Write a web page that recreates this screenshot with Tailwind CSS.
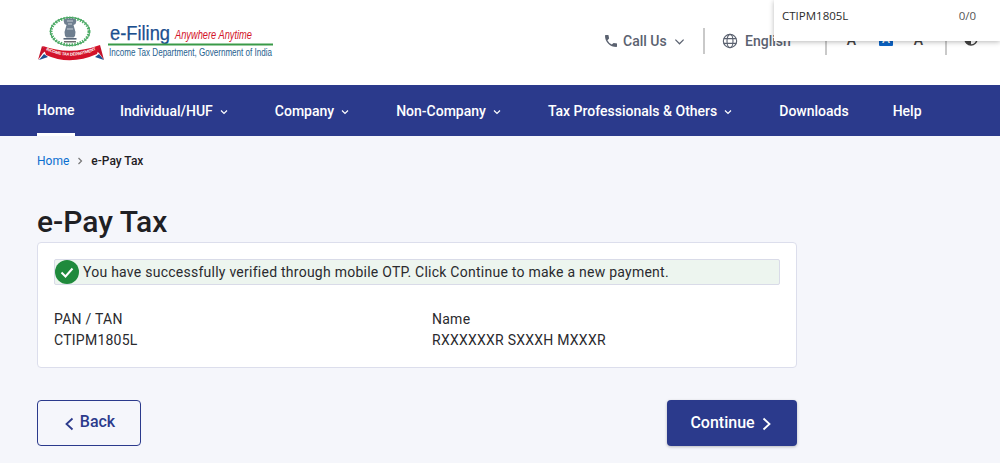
<!DOCTYPE html>
<html lang="en">
<head>
  <meta charset="UTF-8">
  <meta name="viewport" content="width=device-width, initial-scale=1.0">
  <title>e-Pay Tax</title>
  <script src="https://cdn.jsdelivr.net/npm/@tailwindcss/browser@4"></script>
</head>
<body class="relative h-[463px] overflow-hidden bg-[#f5f6fb] font-['Roboto',sans-serif] text-[#1f2024]">
  <!-- Find bar over the header -->
  <div class="absolute top-0 right-0 z-10 flex h-[41px] w-[226px] items-start justify-between bg-white pt-[8px] pr-[24px] pl-[8px] text-[11.5px] leading-[16px] text-[#2b2b2b] shadow-[0_1px_5px_rgba(0,0,0,0.28)] font-['Open_Sans',sans-serif]">
    <span>CTIPM1805L</span>
    <span class="text-[#555]">0/0</span>
  </div>

  <!-- Header -->
  <header class="flex h-[85px] items-start justify-between bg-white pl-[37px]">
    <svg class="mt-[14px] h-[48px] w-[240px]" viewBox="37 14 240 48">
      <defs>
        <path id="ribbon" d="M45 49.5 Q70 62 98 49"/>
      </defs>
      <!-- wreath -->
      <ellipse cx="70" cy="31.5" rx="19.5" ry="14" fill="none" stroke="#2f8f4e" stroke-width="1"/>
      <ellipse cx="70" cy="31.5" rx="19" ry="13.5" fill="none" stroke="#4fae68" stroke-width="3" stroke-dasharray="1.6 1.2"/>
      <!-- emblem -->
      <path d="M66 18.5h8l2.5 2-1 3.5-2 1 2 7-.5 4-1.500 1.500h-7l-1.500-1.500-.5-4 2-7-2-1-1-3.500z" fill="#6f7f90"/>
      <path d="M67 21h6M68 24h4M67 29h6" stroke="#dfe5ea" stroke-width=".8"/>
      <rect x="63.500" y="38" width="13" height="1.600" fill="#59677a"/>
      <rect x="64" y="41" width="12" height="1.500" fill="#6a6a6a"/>
      <!-- ribbon -->
      <path d="M38 60 L43 53 L47 50 L42 46 Z M104 60 L99 53 L95 50 L100 45 Z" fill="#c4122b"/>
      <path d="M39 60 L44 54 L48 57 Z M104 60 L99 54 L95 57 Z" fill="#1d4f91"/>
      <path d="M43 46 Q70 56 100 45 L97 54 Q70 66 46 55 Z" fill="#d3122a"/>
      <text font-size="4.200" font-weight="700" fill="#fff" font-family="Liberation Sans"><textPath href="#ribbon" startOffset="1" textLength="52">INCOME TAX DEPARTMENT</textPath></text>
      <!-- wordmark -->
      <text x="110" y="40" font-size="21" fill="#1b4f8f" stroke="#1b4f8f" stroke-width=".25" font-family="Liberation Sans" textLength="60" lengthAdjust="spacingAndGlyphs">e-Filing</text>
      <text x="175" y="39" font-size="13" font-style="italic" fill="#d3122a" font-family="Liberation Sans" textLength="77" lengthAdjust="spacingAndGlyphs">Anywhere Anytime</text>
      <rect x="108" y="43.500" width="165" height="2" fill="#3a9a48"/>
      <text x="109" y="56" font-size="11" fill="#1f5f8f" font-family="Liberation Sans" textLength="163" lengthAdjust="spacingAndGlyphs">Income Tax Department, Government of India</text>
    </svg>

    <div class="mt-[27px] flex items-center pr-[22px] text-[14px] font-medium text-[#5b6270]">
      <svg class="mr-[4px] size-[16px]" viewBox="0 0 24 24" fill="#5b6270"><path d="M6.6 10.8a15 15 0 0 0 6.600 6.600l2.200-2.200a1 1 0 0 1 1-.25 11.400 11.400 0 0 0 3.600.57 1 1 0 0 1 1 1V20a1 1 0 0 1-1 1A17 17 0 0 1 3 4a1 1 0 0 1 1-1h3.500a1 1 0 0 1 1 1c0 1.250.2 2.450.57 3.570a1 1 0 0 1-.25 1z"/></svg>
      <span class="w-[44px] leading-[26px]">Call Us</span>
      <svg class="ml-[7px] size-[11px]" viewBox="0 0 12 12" fill="none" stroke="#5b6270" stroke-width="1.3"><path d="M1.500 4 6 8.500 10.500 4"/></svg>
      <div class="mr-[17px] ml-[18px] h-[26px] w-[2px] bg-[#c9c9c9]"></div>
      <svg class="size-[16px]" viewBox="0 0 24 24" fill="none" stroke="#5b6270" stroke-width="1.7"><circle cx="12" cy="12" r="10"/><ellipse cx="12" cy="12" rx="4.500" ry="10"/><path d="M2.500 8.500h19M2.500 15.500h19"/></svg>
      <span class="ml-[7px] w-[46px] leading-[26px]">English</span>
      <div class="mt-[1px] mr-[18px] ml-[34px] h-[26px] w-[2px] bg-[#c9c9c9]"></div>
      <span class="mb-[2px] w-[13px] text-center leading-[26px] text-[#444]">A</span>
      <span class="mb-[4px] ml-[21px] h-[14px] w-[14px] rounded-[1px] bg-[#0b63c5] text-center text-[12px] leading-[14px] text-white">A</span>
      <span class="mb-[2px] ml-[19px] w-[13px] text-center leading-[26px] text-[#444]">A</span>
      <div class="mt-[1px] mr-[17px] ml-[20px] h-[26px] w-[2px] bg-[#c9c9c9]"></div>
      <svg class="mb-[4px] size-[14px]" viewBox="0 0 14 14"><circle cx="7" cy="7" r="6" fill="none" stroke="#444" stroke-width="1.4"/><path d="M7 1a6 6 0 0 0 0 12z" fill="#444"/></svg>
    </div>
  </header>

  <!-- Main nav -->
  <nav class="flex h-[51px] items-start bg-[#2b3a8c] pl-[37px] text-[14px] font-medium text-white">
    <a class="mr-[45px] flex h-[51px] w-[38px] items-center border-b-[3px] border-white pt-[2px]">Home</a>
    <a class="mr-[47px] flex h-[51px] items-center pt-[2px]">Individual/HUF
      <svg class="mt-[1px] ml-[7px] size-[8px]" viewBox="0 0 8 8" fill="none" stroke="#fff" stroke-width="1.2"><path d="M1 2.500 4 5.500 7 2.500"/></svg></a>
    <a class="mr-[47px] flex h-[51px] items-center pt-[2px]">Company
      <svg class="mt-[1px] ml-[7px] size-[8px]" viewBox="0 0 8 8" fill="none" stroke="#fff" stroke-width="1.2"><path d="M1 2.500 4 5.500 7 2.500"/></svg></a>
    <a class="mr-[47px] flex h-[51px] items-center pt-[2px]">Non-Company
      <svg class="mt-[1px] ml-[7px] size-[8px]" viewBox="0 0 8 8" fill="none" stroke="#fff" stroke-width="1.2"><path d="M1 2.500 4 5.500 7 2.500"/></svg></a>
    <a class="mr-[47px] flex h-[51px] items-center pt-[2px]">Tax Professionals &amp; Others
      <svg class="mt-[1px] ml-[7px] size-[8px]" viewBox="0 0 8 8" fill="none" stroke="#fff" stroke-width="1.2"><path d="M1 2.500 4 5.500 7 2.500"/></svg></a>
    <a class="mr-[44px] flex h-[51px] items-center pt-[2px]">Downloads</a>
    <a class="flex h-[51px] items-center pt-[2px]">Help</a>
  </nav>

  <main class="px-[37px]">
    <!-- Breadcrumb -->
    <div class="mt-[17px] flex h-[16px] items-center text-[12px] font-medium">
      <span class="font-normal text-[#0b6fd0]">Home</span>
      <svg class="mx-[7px] size-[8px]" viewBox="0 0 8 8" fill="none" stroke="#777" stroke-width="1.2"><path d="M2.500 1 5.500 4 2.500 7"/></svg>
      <span class="text-[#1f2024]">e-Pay Tax</span>
    </div>

    <h1 class="mt-[32px] h-[41px] text-[30px] leading-[42px] font-medium">e-Pay Tax</h1>

    <!-- Card -->
    <section class="h-[126px] w-[760px] rounded-[4px] border border-[#dcdeec] bg-white px-[16px] pt-[16px] text-[14px] tracking-[0.25px] text-[#2a2a2e]">
      <div class="flex h-[26px] w-[726px] items-center rounded-[2px] border border-[#d9dbe8] bg-[#edf5ef]">
        <svg class="size-[24px] shrink-0" viewBox="0 0 24 24"><circle cx="12" cy="12" r="12" fill="#1f8a3c"/><path d="M6.500 12.500 10.500 16.500 17.500 8.500" fill="none" stroke="#fff" stroke-width="2"/></svg>
        <span class="ml-[4px]">You have successfully verified through mobile OTP. Click Continue to make a new payment.</span>
      </div>
      <div class="mt-[24px] grid grid-cols-[378px_1fr] leading-[21px]">
        <div>PAN / TAN</div>
        <div>Name</div>
        <div>CTIPM1805L</div>
        <div>RXXXXXXR SXXXH MXXXR</div>
      </div>
    </section>

    <!-- Actions -->
    <div class="mt-[32px] flex w-[760px] justify-between">
      <button class="flex h-[46px] w-[104px] items-center justify-center rounded-[4px] border border-[#2b3a8c] pb-[2px] text-[16px] font-medium text-[#2b3a8c]">
        <svg class="mt-[3px] mr-[3px] size-[14px]" viewBox="0 0 14 14" fill="none" stroke="#2b3a8c" stroke-width="1.8"><path d="M9.500 1.500 3.500 7 9.500 12.500"/></svg>
        Back
      </button>
      <button class="flex h-[46px] w-[130px] items-center justify-center rounded-[4px] bg-[#2b3a8c] text-[16px] font-medium text-white shadow-[0_1px_3px_rgba(0,0,0,0.25)]">
        Continue
        <svg class="mt-[1px] ml-[5px] size-[14px]" viewBox="0 0 14 14" fill="none" stroke="#fff" stroke-width="1.8"><path d="M3.500 1.500 9.500 7 3.500 12.500"/></svg>
      </button>
    </div>
  </main>
</body>
</html>
